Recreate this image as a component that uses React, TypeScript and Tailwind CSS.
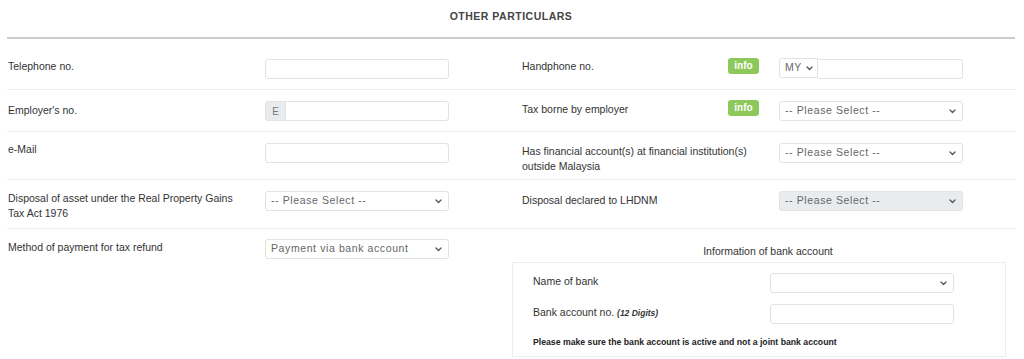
import React from 'react';

const font = { fontFamily: '"Liberation Sans", Arial, sans-serif' };

function TextInput({ className = '' }: { className?: string }) {
  return (
    <input
      type="text"
      className={`block h-[20px] rounded-[3px] border border-[#e2e2e2] bg-white px-[5px] text-[10.5px] outline-none ${className}`}
    />
  );
}

function Select({
  value,
  disabled,
  className = '',
  selectClass = '',
  chevron = 'right-[7px]',
}: {
  value: string;
  disabled?: boolean;
  className?: string;
  selectClass?: string;
  chevron?: string;
}) {
  return (
    <div className={`relative h-[20px] ${className}`}>
      <select
        disabled={disabled}
        defaultValue={value}
        className={`block h-full w-full appearance-none rounded-[3px] border border-[#e2e2e2] pl-[5px] pr-[14px] text-[10.5px] tracking-[0.6px] text-[#666] outline-none ${
          disabled ? 'bg-[#e9ecef]' : 'bg-white'
        } ${selectClass}`}
      >
        <option value={value}>{value}</option>
      </select>
      <svg
        className={`pointer-events-none absolute top-[8px] ${chevron}`}
        width="7"
        height="5"
        viewBox="0 0 7 5"
        fill="none"
      >
        <path d="M1 1l2.5 2.5L6 1" stroke="#555" strokeWidth="1.3" strokeLinecap="round" strokeLinejoin="round" />
      </svg>
    </div>
  );
}

function Info() {
  return (
    <span className="flex h-[16px] w-[31px] items-center justify-center rounded-[3px] bg-[#8cc85a] text-[10px] font-bold leading-none text-white">
      info
    </span>
  );
}

function Label({ children, className = '' }: { children: React.ReactNode; className?: string }) {
  return <div className={`text-[10.5px] leading-[15px] text-[#333] ${className}`}>{children}</div>;
}

function Row({
  left,
  leftControl,
  right,
  rightControl,
  info,
  height,
}: {
  left: React.ReactNode;
  leftControl: React.ReactNode;
  right: React.ReactNode;
  rightControl: React.ReactNode;
  info?: boolean;
  height: string;
}) {
  return (
    <div className={`flex border-b border-[#ececec] pt-[11px] ${height}`}>
      <div className="flex w-[504px] shrink-0 items-start">
        <div className="w-[258px] shrink-0 pl-[1px] pr-4">{left}</div>
        <div className="flex w-[184px] shrink-0">{leftControl}</div>
      </div>
      <div className="flex flex-1 items-start pl-[11px]">
        {info ? (
          <>
            <div className="w-[206px] shrink-0 pr-3">{right}</div>
            <div className="w-[51px] shrink-0 -mt-[1px]">
              <Info />
            </div>
          </>
        ) : (
          <div className="w-[257px] shrink-0 pr-[12px]">{right}</div>
        )}
        <div className="flex w-[184px] shrink-0">{rightControl}</div>
      </div>
    </div>
  );
}

export default function App() {
  return (
    <div className="h-[359px] w-[1024px] overflow-hidden bg-white" style={font}>
      <div className="mx-[7px] w-[1008px]">
        <h2 className="pt-[9px] text-center text-[10.5px] font-bold leading-[14px] tracking-[0.5px] text-[#444]">
          OTHER PARTICULARS
        </h2>
        <div className="mt-[14px] h-[2px] bg-[#cccccc]" />

        <div className="mt-[9px]">
          <Row
            height="h-[42px]"
            left={<Label>Telephone no.</Label>}
            leftControl={<TextInput className="w-full" />}
            right={<Label>Handphone no.</Label>}
            info
            rightControl={
              <>
                <Select
                  value="MY"
                  className="-mt-[1px] w-[39px] shrink-0"
                  selectClass="rounded-r-none"
                  chevron="right-[5px]"
                />
                <TextInput className="min-w-0 flex-1 rounded-l-none border-l-0" />
              </>
            }
          />
          <Row
            height="h-[42px]"
            left={<Label className="mt-[2px]">Employer's no.</Label>}
            leftControl={
              <>
                <span className="flex h-[20px] w-[20px] shrink-0 items-center justify-center rounded-l-[3px] border border-r-0 border-[#e2e2e2] bg-[#e9ecef] text-[10px] text-[#777]">
                  E
                </span>
                <TextInput className="min-w-0 flex-1 rounded-l-none" />
              </>
            }
            right={<Label className="mt-[1px]">Tax borne by employer</Label>}
            info
            rightControl={<Select value="-- Please Select --" className="w-[184px]" />}
          />
          <Row
            height="h-[48px]"
            left={<Label className="-mt-[1px]">e-Mail</Label>}
            leftControl={<TextInput className="w-full" />}
            right={
              <Label className="mt-[1px]">
                Has financial account(s) at financial institution(s) outside Malaysia
              </Label>
            }
            rightControl={<Select value="-- Please Select --" className="w-[184px]" />}
          />
          <Row
            height="h-[49px]"
            left={<Label>Disposal of asset under the Real Property Gains Tax Act 1976</Label>}
            leftControl={<Select value="-- Please Select --" className="w-full" />}
            right={<Label className="mt-[2px]">Disposal declared to LHDNM</Label>}
            rightControl={<Select value="-- Please Select --" disabled className="w-[184px]" />}
          />

          <div className="flex pt-[10px]">
            <div className="flex w-[504px] shrink-0 items-start">
              <div className="w-[258px] shrink-0 pl-[1px] pr-4">
                <Label className="mt-[1px]">Method of payment for tax refund</Label>
              </div>
              <Select value="Payment via bank account" className="w-[184px]" />
            </div>
            <div className="min-w-0 flex-1">
              <div className="w-[514px] pt-[5px] text-center text-[10.5px] leading-[15px] text-[#333]">
                Information of bank account
              </div>
              <div className="ml-[1px] mt-[3px] w-[494px] border border-[#ececec] px-[20px] pb-[8px] pt-[10px]">
                <div className="flex items-start">
                  <Label className="mt-[1px] w-[237px] shrink-0">Name of bank</Label>
                  <Select value="" className="w-[184px]" />
                </div>
                <div className="mt-[11px] flex items-start">
                  <Label className="mt-[1px] w-[237px] shrink-0">
                    Bank account no. <span className="text-[8.5px] font-bold italic">(12 Digits)</span>
                  </Label>
                  <TextInput className="w-[184px]" />
                </div>
                <p className="mt-[12px] whitespace-nowrap text-[8.7px] font-bold leading-[12px] text-[#222]">
                  Please make sure the bank account is active and not a joint bank account
                </p>
              </div>
            </div>
          </div>
        </div>
      </div>
    </div>
  );
}
